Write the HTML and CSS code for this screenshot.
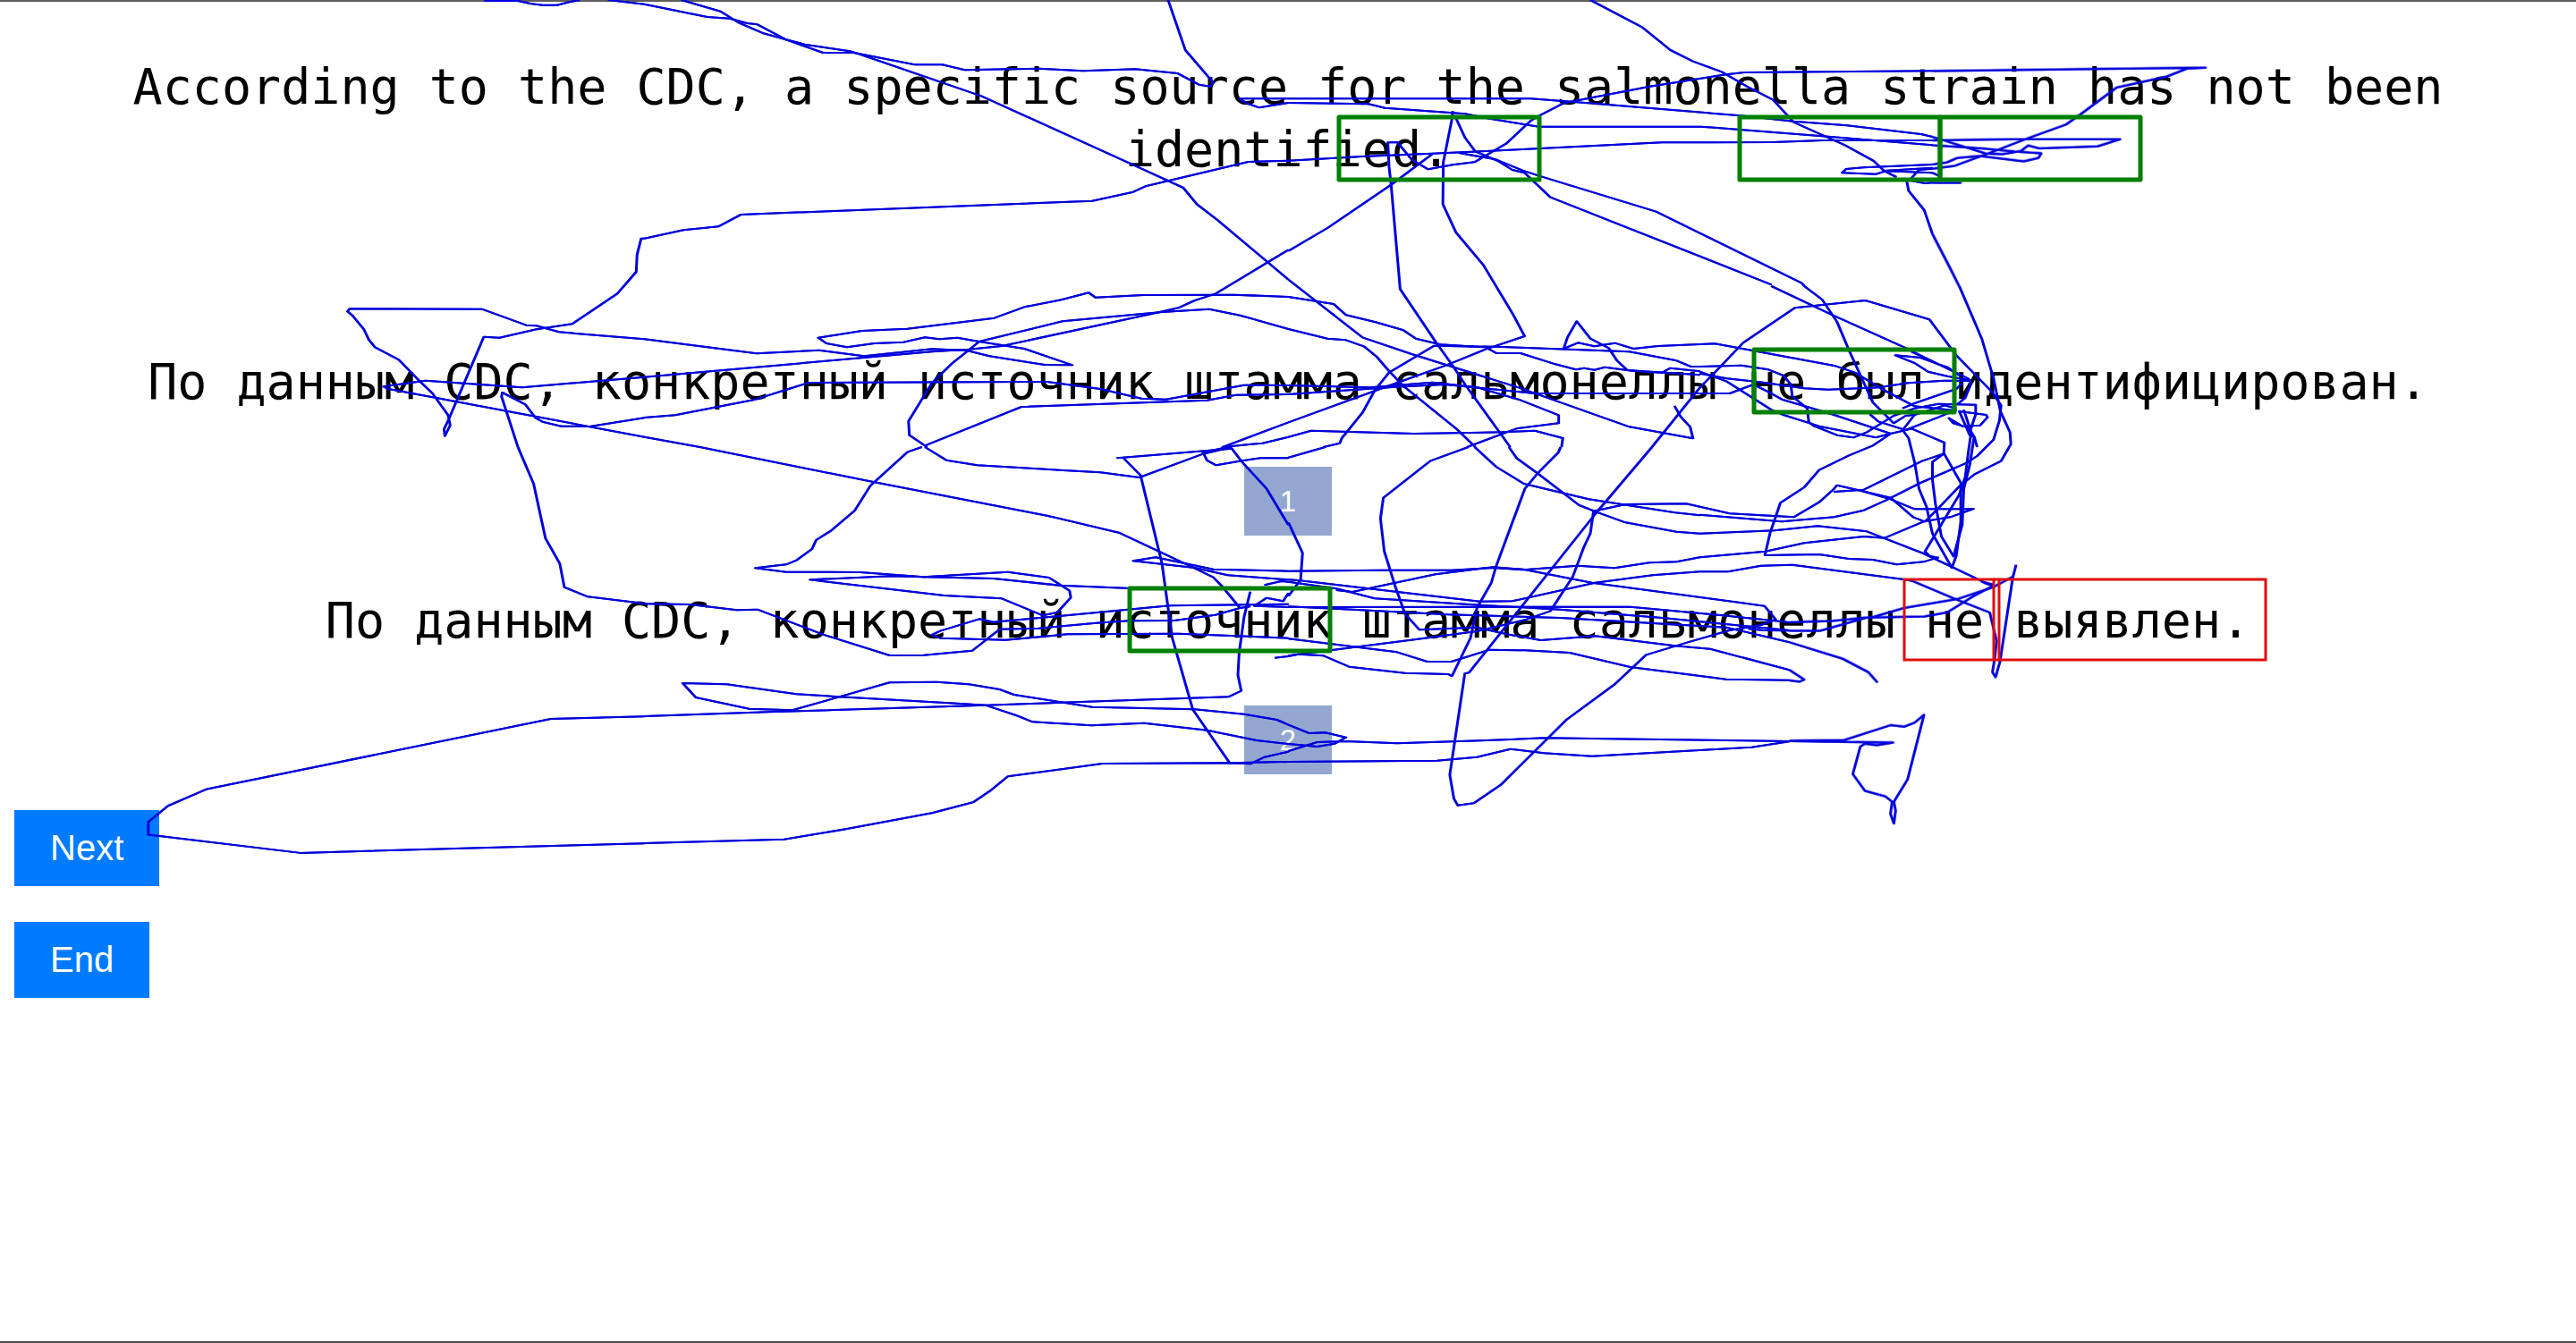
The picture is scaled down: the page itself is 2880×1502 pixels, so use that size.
FILE: index.html
```html
<!DOCTYPE html>
<html lang="en">
<head>
<meta charset="utf-8">
<title>Translation comparison</title>
<link rel="stylesheet" href="styles.css">
</head>
<body>
<main class="page">
  <p class="sentence">According to the CDC, a specific source for the salmonella strain has not been identified.</p>
  <section class="choices" lang="ru">
    <div class="choice">
      <p class="sentence">По данным CDC, конкретный источник штамма сальмонеллы не был идентифицирован.</p>
      <button class="pick" type="button">1</button>
    </div>
    <div class="choice">
      <p class="sentence">По данным CDC, конкретный источник штамма сальмонеллы не выявлен.</p>
      <button class="pick" type="button">2</button>
    </div>
  </section>
  <div class="actions">
    <button class="action" type="button">Next</button>
    <button class="action" type="button">End</button>
  </div>
</main>

<svg class="trace" viewBox="0 0 2880 1502" aria-hidden="true">
  <g class="gaze">
    <svg x="0" y="0" width="720" height="500" viewBox="0 0 1568 1500" preserveAspectRatio="none">
      <polyline points="1178,3 1260,3 1290,12 1320,17 1355,17 1385,7 1410,0"/>
      <polyline points="1480,0 1568,14"/>
      <polyline points="1568,800 1560,800 1550,855 1548,912 1502,985 1392,1087 1305,1105 1215,1133 1177,1130 1092,1405 1080,1440 1082,1463 1095,1427 1090,1393 1052,1320 1020,1278 970,1207 912,1165 897,1140 885,1105 858,1060 845,1045 850,1036 1172,1037 1280,1091 1305,1093 1360,1114 1568,1138"/>
      <polyline points="1568,1265 1270,1300 1035,1277 933,1297 945,1305 1568,1466"/>
      <polyline points="1260,1500 1220,1330 1222,1317 1278,1357 1303,1402 1320,1415 1365,1430 1435,1431 1568,1402"/>
    </svg>
    <svg x="720" y="0" width="720" height="500" viewBox="0 0 1568 1500" preserveAspectRatio="none">
      <polyline points="0,14 153,57 208,62 250,78 275,82 345,133 435,177 510,177 658,217 725,217 780,235 890,232 960,230 1068,238 1195,232 1298,246 1350,284 1378,290 1385,277 1317,168 1275,0"/>
      <polyline points="90,0 185,38 228,75 290,112 345,133 390,149 500,172 520,180 820,322 1190,553 1312,630 1345,685 1395,738 1568,938"/>
      <polyline points="0,800 95,772 180,760 235,720 1090,674 1190,644 1220,625 1470,543 1568,539"/>
      <polyline points="1568,331 1450,331 1465,346 1497,361 1568,345"/>
      <polyline points="0,1265 700,1180 790,1172 870,1161 1245,1050 1300,1033 1340,1008 1390,986 1568,838"/>
      <polyline points="0,1138 273,1186 425,1175 535,1195 700,1171 785,1176 840,1195 975,1224 1042,1225 925,1170 815,1146 762,1133 718,1138 683,1132 630,1148 560,1152 493,1165 443,1152 423,1133 530,1110 640,1103 852,1067 925,1030 1015,1006 1082,982 1098,998 1215,990 1435,989 1568,996"/>
      <polyline points="1568,1104 1450,1058 1375,1037 1260,1047 1018,1078 815,1146 785,1180 750,1218 700,1285 643,1413 645,1460 688,1500"/>
      <polyline points="0,1401 75,1393 265,1342 400,1284 980,1281 1110,1305 1210,1337 1270,1340 1460,1292 1568,1293"/>
      <polyline points="683,1495 918,1365 1370,1343 1440,1325 1568,1323"/>
      <polyline points="0,1466 135,1500"/>
      <polyline points="1568,1417 1408,1500 1505,1487 1568,1466"/>
    </svg>
    <svg x="1440" y="0" width="720" height="500" viewBox="0 0 1568 1500" preserveAspectRatio="none">
      <polyline points="735,0 862,92 930,168 985,206 1055,241 1120,293 1180,335 1230,410 1355,487 1425,540 1450,573 1480,594"/>
      <polyline points="0,331 590,331 730,346 1100,388 1230,407 1360,421 1540,450 1568,459"/>
      <polyline points="0,345 195,349 235,362 430,382 490,398 610,425 1005,425 1300,457 1568,487"/>
      <polyline points="0,539 180,525 350,515 470,508 910,478 1180,477 1300,471 1568,471"/>
      <polyline points="0,842 95,765 250,620 350,517"/>
      <polyline points="1568,238 1110,243 1065,250 880,290 670,346 615,385 590,405 530,482 453,544 400,553 340,568 300,535 265,477 242,478 245,560 250,620 272,970 360,1150 400,1227 430,1290 540,1500"/>
      <polyline points="400,372 398,400 377,545 376,685 408,780 475,890 547,1055 575,1128 480,1172 385,1225 265,1284 0,1417"/>
      <polyline points="405,388 430,462 455,508 510,540 545,570 575,580 638,662 1176,955"/>
      <polyline points="415,513 505,535 570,572 610,590 895,710 1250,950 1256,960"/>
      <polyline points="0,938 180,1132 300,1188 560,1300 830,1432 985,1471 978,1432 955,1398 940,1362"/>
      <polyline points="0,996 110,1020 140,1057 210,1080 280,1108 310,1136 370,1156 480,1165 505,1184 565,1185 650,1222 700,1240 720,1235 745,1241 770,1232 830,1243 1002,1258"/>
      <polyline points="0,1104 95,1136 140,1141 185,1163 215,1197 245,1245 280,1295 410,1440 455,1500"/>
      <polyline points="1002,1155 900,1161 840,1170 795,1151 745,1162 705,1150 670,1170 680,1130 702,1078 735,1136 780,1168 800,1210 825,1242 870,1247 910,1250 930,1235 1002,1246"/>
      <polyline points="1002,1230 980,1230 945,1210 830,1180 520,1164 355,1160 245,1250 210,1310 180,1385 130,1470 125,1487 85,1500"/>
      <polyline points="0,1293 200,1300 350,1283 460,1300 560,1340 658,1393 658,1420 555,1438 435,1500"/>
      <polyline points="0,1323 260,1298 380,1290 600,1320 1002,1320"/>
      <polyline points="0,1466 55,1445 305,1455 520,1450 600,1445 668,1470 665,1500"/>
      <polyline points="885,1500 1002,1300"/>
      <polyline points="1568,552 1400,562 1358,567 1348,580 1430,584 1455,574 1568,580"/>
      <polyline points="1450,573 1568,563"/>
      <polyline points="1568,566 1535,570 1512,605 1550,615 1568,613"/>
      <polyline points="1505,605 1510,640 1548,705 1568,785"/>
    </svg>
    <svg x="2160" y="0" width="720" height="500" viewBox="0 0 1568 1500" preserveAspectRatio="none">
      <polyline points="0,238 430,231 665,227 620,230 570,257 448,294 360,384 325,418 230,465 145,510 55,556 0,566"/>
      <polyline points="0,471 200,467 457,467 402,491 260,498 233,488 215,507 170,517 130,515 0,459"/>
      <polyline points="0,487 120,498 200,508 265,514 258,530 222,541 115,523 60,530 35,545 0,552"/>
      <polyline points="0,613 70,613"/>
      <polyline points="0,580 20,592"/>
      <polyline points="0,785 45,905 65,960"/>
    </svg>
    <svg x="1900" y="320" width="400" height="340" viewBox="0 0 1200 1020" preserveAspectRatio="none">
      <polyline points="870,0 945,175 985,310 1008,420 1040,490 1043,530 1010,587 920,632 870,672 800,745 755,790 715,775 640,710 545,688 460,668 450,680 400,725 315,775 100,763 0,740"/>
      <polyline points="240,0 440,95 680,203 800,262 900,310 910,325 890,375 865,395"/>
      <polyline points="350,0 410,45 460,120 500,215 580,390 650,460 690,435 720,432"/>
      <polyline points="0,340 50,290 145,190 318,73 555,48 770,112 860,232 980,355 1010,400 1005,450 985,515 930,570 890,595 740,660 625,718 550,752 450,775 275,790 0,767"/>
      <polyline points="0,195 50,193 180,217 455,268 520,290 610,345 720,403 860,418"/>
      <polyline points="0,270 140,266 230,280 280,300 305,330 310,370 360,410 365,455 380,468 460,500 515,508 560,490 650,435 720,410 800,395 925,398 925,430 905,490"/>
      <polyline points="0,293 90,310 200,322 350,343 430,347 600,340 700,325 820,317 905,318"/>
      <polyline points="0,287 90,320 240,415 280,432 400,470 590,508 640,495 690,483 800,440 860,415"/>
      <polyline points="0,360 100,360 180,330 230,355 275,380 370,408 450,432 640,495"/>
      <polyline points="900,315 830,302 765,287 720,258 655,232 740,240 800,262 830,272 870,300"/>
      <polyline points="680,410 720,393 860,345 880,325"/>
      <polyline points="710,220 800,262"/>
      <polyline points="570,430 600,455 690,483 710,478 820,525 818,560 875,660 875,790 860,905 845,945 780,830 760,740 735,680 720,590 700,510 680,483 720,432 820,400 860,410"/>
      <polyline points="640,495 580,535 500,568 400,617 350,675 270,727 235,830 218,903 400,900 500,915 580,918 660,934 750,925 800,910"/>
      <polyline points="450,690 550,683 745,587 818,562 780,590 780,650 790,730 810,840 850,905"/>
      <polyline points="545,688 640,715 720,748 918,747 840,775 750,790 620,845 550,840 350,862 220,890 0,910"/>
      <polyline points="0,830 250,820 395,805 560,823 750,897 845,942 950,992 985,1002"/>
      <polyline points="0,958 95,958 205,938 310,935 690,985 715,990"/>
      <polyline points="885,415 910,490 900,560 890,640 870,700 755,890 770,905 800,912"/>
      <polyline points="930,540 920,505 905,500 870,420 960,432 965,440 940,467 880,470 835,443 850,460 900,475 920,505 905,600 885,680 880,800 850,910"/>
    </svg>
    <svg x="0" y="500" width="720" height="640" viewBox="0 0 1568 1568" preserveAspectRatio="none">
      <polyline points="1260,0 1298,100 1327,250 1362,320 1373,384 1430,410 1568,429"/>
      <polyline points="1568,738 1340,745 503,937 408,983 360,1027 360,1062 730,1112 1568,1086"/>
    </svg>
    <svg x="720" y="500" width="720" height="460" viewBox="0 0 1568 1380" preserveAspectRatio="none">
      <polyline points="135,0 560,118 980,230 1155,287 1330,400 1385,437 1405,465 1450,540 1475,535"/>
      <polyline points="683,0 735,44 810,61 1110,85 1205,102 1360,23 1430,0"/>
      <polyline points="675,0 640,17 550,130 512,213 455,280 418,312 408,342 370,380 345,394 270,406 345,419 525,420 680,436 850,441 1010,464 1185,474"/>
      <polyline points="680,436 885,419 985,438 1035,482 1038,505 1005,555 970,565 870,508 730,498 403,445 600,433 680,436"/>
      <polyline points="1150,37 1165,35 1208,95 1260,390 1285,640 1335,880 1425,1060 1568,1056"/>
      <polyline points="1165,35 1430,5 1455,50 1515,140 1568,262"/>
      <polyline points="1420,0 1360,18 1370,45 1392,61 1455,46 1500,37 1568,37"/>
      <polyline points="0,526 110,528 225,547 275,545 435,629 597,699 680,698 798,683 865,611 960,608 1100,590 1180,583 1290,582 1390,563 1450,540"/>
      <polyline points="1568,527 1280,532 1010,567 850,587 815,577 720,617 700,630 720,641 880,647 1030,628 1300,626 1470,635 1568,641"/>
      <polyline points="1568,416 1385,410 1245,370 1190,382 1340,405 1420,430 1568,445"/>
      <polyline points="1510,463 1550,450 1568,452"/>
      <polyline points="1568,490 1555,517 1515,506 1485,533 1568,537"/>
      <polyline points="1475,485 1460,570 1448,690 1445,765 1453,818 1422,838 830,866 300,889 0,903"/>
      <polyline points="1568,996 1490,984 1370,950 1217,926 1088,934 945,922 905,900 830,866 780,862 370,829 200,796 93,792 125,840 255,878 360,883 597,790 712,788 790,796 865,813 900,831 1090,872 1340,880 1460,896 1540,915 1568,932"/>
      <polyline points="1535,707 1568,702"/>
      <polyline points="1568,1022 1510,1040 1475,1063 1425,1060 1115,1062 885,1105 845,1150 800,1192 700,1228 490,1282 340,1316 0,1329"/>
    </svg>
    <svg x="1440" y="500" width="560" height="460" viewBox="0 0 1568 1380" preserveAspectRatio="none">
      <polyline points="0,35 115,0"/>
      <polyline points="0,253 44,355 38,445 0,500"/>
      <polyline points="563,0 445,46 297,170 288,240 300,350 335,470 365,560 410,613 590,605 680,627 790,648 960,634 1210,667 1320,677 1568,748"/>
      <polyline points="583,0 650,66 737,123 940,175 1210,220 1288,229"/>
      <polyline points="690,0 715,38 780,88 910,195 970,220 1055,253 1215,284 1288,290"/>
      <polyline points="852,0 845,18 780,88 740,140 650,400 635,455 590,540 570,640 512,768 500,762 365,758 190,737 110,700 30,695 0,702"/>
      <polyline points="1138,0 960,225 565,757 552,760 505,1100 518,1180 530,1202 580,1195 665,1133 870,915 1020,797 1120,697 1250,655 1380,615 1480,597 1525,578 1490,533 950,455 735,410 640,403 460,427 200,486 150,480"/>
      <polyline points="1288,200 1245,190 1055,192 955,215 945,290 925,335 890,435 820,550 740,580 590,618 400,645 0,700"/>
      <polyline points="0,416 290,413 510,413 640,405 735,412 905,398 1020,406 1130,388 1215,385 1288,370"/>
      <polyline points="0,445 30,447 600,518 700,517 960,455 1140,430 1288,418"/>
      <polyline points="0,452 150,475 270,508 600,530 850,545 1170,573 1568,615"/>
      <polyline points="0,537 1070,536 1360,565 1568,588"/>
      <polyline points="0,535 200,545 500,562 850,573 1370,605 1568,655"/>
      <polyline points="1440,610 1490,615 1568,616"/>
      <polyline points="0,643 340,688 435,720 510,720 630,680 740,682 880,690 1070,738 1370,779 1568,782"/>
      <polyline points="0,932 65,960 115,958 180,974 145,995 90,1005 0,996"/>
      <polyline points="0,1020 90,990 180,987 340,994 600,985 800,976 1000,979 1568,987"/>
      <polyline points="0,1056 465,1052 590,1040 695,1013 800,1027 950,1037 1450,1007 1568,988"/>
    </svg>
    <svg x="1960" y="560" width="600" height="400" viewBox="0 0 1568 1200" preserveAspectRatio="none">
      <polyline points="767,215 757,260 720,540 707,592 698,575 705,525 710,470 690,375 590,330 466,270"/>
      <polyline points="757,255 700,290 595,330 440,360 350,390 230,403 105,408"/>
      <polyline points="665,270 680,278 700,285 640,322 565,375 500,388 330,392 195,436 105,436"/>
      <polyline points="105,475 260,530 335,575 362,610"/>
      <polyline points="105,568 148,600 135,607 105,603"/>
      <polyline points="105,805 265,803 400,753 440,758 470,745 498,718 450,935 410,1010 415,1040 410,1083 400,1050 405,1010 385,992 325,973 290,917 312,825 325,815 360,820 408,811 200,808 105,806"/>
    </svg>
  </g>
  <g class="fix">
    <rect x="1497" y="131" width="224" height="70"/>
    <rect x="1945" y="131" width="224" height="70"/>
    <rect x="2169" y="131" width="224" height="70"/>
    <rect x="1961" y="391" width="224" height="70"/>
    <rect x="1263" y="658" width="224" height="70"/>
  </g>
  <g class="focus">
    <rect x="2129" y="648" width="100" height="90"/>
    <rect x="2235" y="648" width="298" height="90"/>
    <path d="M2229 648h6M2229 738h6"/>
  </g>
</svg>
</body>
</html>
```
FILE: styles.css
```css
* {
  box-sizing: border-box;
}

body {
  margin: 0;
  position: relative;
  background: #fff;
  color: #000;
}

.page {
  min-height: 100vh;
  padding: 60px 16px 40px;
  border-top: 2px solid #5f5c5c;
  border-bottom: 2px solid #4a4a4c;
}

.sentence {
  margin: 0;
  font-family: "DejaVu Sans Mono", monospace;
  font-size: 55px;
  line-height: 70px;
  text-align: center;
}

.choices {
  display: flex;
  flex-direction: column;
  gap: 60px;
  margin-top: 190px;
}

.choice {
  display: flex;
  flex-direction: column;
  align-items: center;
  gap: 60px;
}

button {
  border: 0;
  color: #fff;
  font-family: "Liberation Sans", Arial, sans-serif;
  cursor: pointer;
}

.pick {
  padding: 20px 40px;
  background: #93a7d0;
  font-size: 33px;
  line-height: 37px;
}

.actions {
  display: flex;
  flex-direction: column;
  align-items: flex-start;
  gap: 40px;
  margin-top: 40px;
}

.action {
  padding: 20px 40px;
  background: #007bff;
  font-size: 40px;
  line-height: 45px;
}

.trace {
  position: absolute;
  top: 0;
  left: 0;
  width: 100%;
  height: auto;
  pointer-events: none;
}

.trace svg {
  overflow: visible;
}

.trace polyline,
.trace rect,
.trace path {
  fill: none;
  vector-effect: non-scaling-stroke;
}

.gaze {
  stroke: #0000dc;
  stroke-width: 2px;
  stroke-linejoin: round;
  filter: drop-shadow(1px 0 0 #0000dc);
}

.fix {
  stroke: #008000;
  stroke-width: 5px;
  stroke-linejoin: round;
}

.focus {
  stroke: #e00c0c;
  stroke-width: 3px;
}
```
